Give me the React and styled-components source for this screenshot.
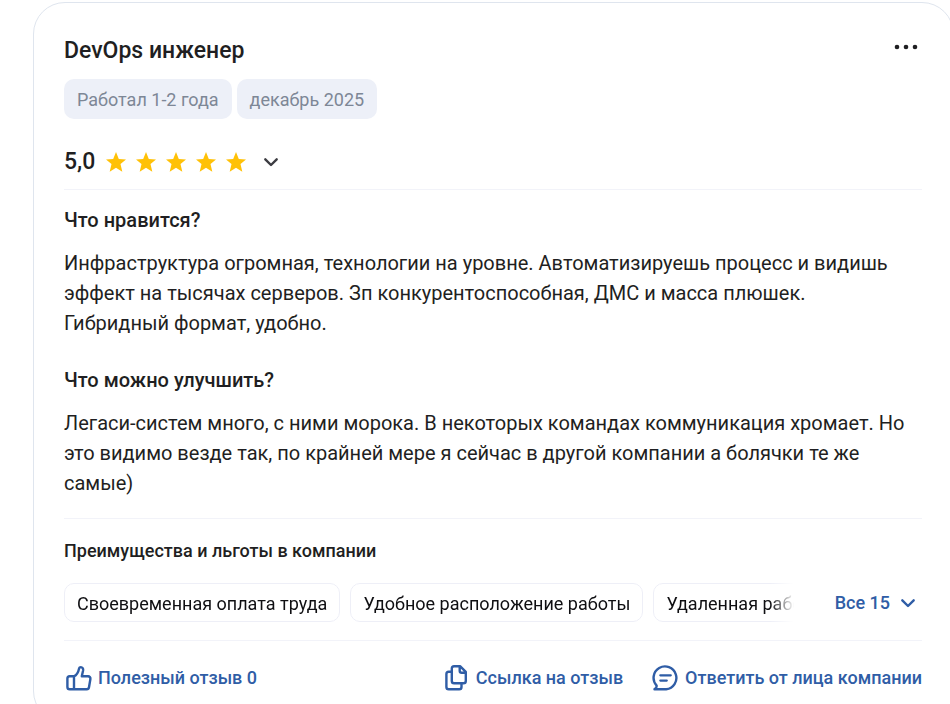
import React, { useState } from 'react';
import styled, { createGlobalStyle } from 'styled-components';

const GlobalStyle = createGlobalStyle`
    * {
        box-sizing: border-box;
    }
    body {
        margin: 0;
        background: #ffffff;
        color: #1f1f22;
        font-family: Roboto, 'Liberation Sans', sans-serif;
    }
    button {
        font-family: inherit;
        border: none;
        background: none;
        padding: 0;
        cursor: pointer;
    }
    svg {
        display: block;
        flex-shrink: 0;
    }
`;

const Page = styled.main`
    padding-top: 2px;
    padding-left: 33px;
    overflow: hidden;
`;

// The card runs slightly past the right side of the page
const Card = styled.article`
    margin-right: -4px;
    padding: 31px 31px 30px 30px;
    border: 1px solid #dfe5ee;
    border-radius: 32px;
`;

const Header = styled.header`
    display: flex;
    justify-content: space-between;
    align-items: flex-start;
`;

const Title = styled.h2`
    margin: 0;
    font-size: 23px;
    line-height: 34px;
    font-weight: 500;
`;

const MenuButton = styled.button`
    padding: 8px 4px;
    color: #1f1f22;
`;

const Tags = styled.div`
    display: flex;
    gap: 5px;
    margin-top: 11px;
`;

const Tag = styled.span`
    padding: 9px 13px 7px;
    border-radius: 10px;
    background: #edf0f8;
    color: #7d8796;
    font-size: 18px;
    line-height: 24px;
`;

const Rating = styled.div`
    display: flex;
    align-items: center;
    margin-top: 27px;
    padding-bottom: 11px;
    border-bottom: 1px solid #f2f3f9;
`;

const Score = styled.span`
    margin-right: 11px;
    font-size: 23px;
    line-height: 32px;
    font-weight: 500;
`;

const Stars = styled.div`
    display: flex;
    gap: 10px;
`;

const ExpandButton = styled.button`
    margin-left: 17px;
    color: #3c3c42;
`;

const Section = styled.section`
    margin-top: ${(props) => (props.$first ? '15px' : '27px')};
`;

const SectionTitle = styled.h3`
    margin: 0;
    font-size: 20px;
    line-height: 30px;
    font-weight: 500;
`;

const Text = styled.p`
    margin: 13px 0 0;
    padding-right: 10px;
    font-size: 20px;
    line-height: 30px;
`;

const Benefits = styled.section`
    margin-top: 20px;
    padding: 20px 0 18px;
    border: solid #f2f3f9;
    border-width: 1px 0;
`;

const BenefitsTitle = styled.h4`
    margin: 0;
    font-size: 18px;
    line-height: 24px;
    font-weight: 500;
`;

const BenefitsRow = styled.div`
    display: flex;
    align-items: center;
    margin-top: 20px;
`;

const BenefitList = styled.ul`
    display: flex;
    flex: 1;
    gap: 10px;
    min-width: 0;
    margin: 0;
    padding: 0;
    list-style: none;
    overflow: hidden;
    mask-image: linear-gradient(to right, #000 calc(100% - 24px), transparent);
`;

const Benefit = styled.li`
    flex-shrink: 0;
    padding: 8px 12px 6px;
    border: 1px solid #eeeff7;
    border-radius: 10px;
    color: #0f0f12;
    font-size: 18px;
    line-height: 23px;
`;

const AllButton = styled.button`
    display: flex;
    align-items: center;
    gap: 10px;
    margin-left: 41px;
    padding-right: 6px;
    color: #2f5da6;
    font-size: 18px;
    line-height: 24px;
    font-weight: 500;
`;

const Actions = styled.footer`
    display: flex;
    align-items: center;
    gap: 28px;
    padding-top: 23px;
`;

const Action = styled.button`
    display: flex;
    align-items: center;
    gap: 6px;
    color: #2f5da6;
    font-size: 18px;
    line-height: 28px;
    font-weight: 500;
    white-space: nowrap;

    &:first-child {
        margin-right: auto;
    }
`;

const DotsIcon = () => (
    <svg width="24" height="10" viewBox="0 0 24 10" fill="currentColor" aria-hidden="true">
        <circle cx="3" cy="5" r="2.3" />
        <circle cx="12" cy="5" r="2.3" />
        <circle cx="21" cy="5" r="2.3" />
    </svg>
);

const StarIcon = () => (
    <svg width="20" height="20" viewBox="0 0 20 20" fill="#ffc107" aria-hidden="true">
        <path d="M10 0l2.8 6.9 7.2.5-5.5 4.700 1.800 7.600L10 15.700l-6.300 4 1.800-7.600L0 7.400l7.200-.5z" />
    </svg>
);

const ChevronIcon = () => (
    <svg width="16" height="16" viewBox="0 0 16 16" fill="none" stroke="currentColor" strokeWidth="2.4" strokeLinecap="round" strokeLinejoin="round" aria-hidden="true">
        <path d="M2.300 5.300L8 11l5.700-5.700" />
    </svg>
);

const LineIcon = ({ children }) => (
    <svg width="28" height="28" viewBox="0 0 28 28" fill="none" stroke="currentColor" strokeWidth="2.4" strokeLinecap="round" strokeLinejoin="round" aria-hidden="true">
        {children}
    </svg>
);

const LikeIcon = () => (
    <LineIcon>
        <path d="M10 25.200V12.300H5.700a2.300 2.300 0 0 0-2.300 2.300v8.300a2.300 2.300 0 0 0 2.300 2.300h17a2.300 2.300 0 0 0 2.300-1.900l1.400-8.300a2.300 2.300 0 0 0-2.300-2.700h-6.300l1.300-5.700c.4-2-.7-3.500-2.300-3.500-.9 0-1.500.5-1.700 1.300-.7 3.300-2.200 6.500-5.100 7.900" />
    </LineIcon>
);

const CopyIcon = () => (
    <LineIcon>
        <path d="M18.300 2.300h-6.200A2.300 2.300 0 0 0 9.800 4.600v12.300a2.300 2.300 0 0 0 2.300 2.300h9.400a2.300 2.300 0 0 0 2.300-2.300V7.800zM17.700 2.800v3.900a2 2 0 0 0 2 2h3.600" />
        <path d="M9.500 7.800H6.700a2.300 2.300 0 0 0-2.300 2.300v12.800a2.300 2.300 0 0 0 2.300 2.300h10.500a2.300 2.300 0 0 0 2.300-2.300v-3" />
    </LineIcon>
);

const ReplyIcon = () => (
    <LineIcon>
        <path d="M3.500 25.200c1.500-.7 2.300-1.800 2.100-3.600A11.400 11.400 0 1 1 15.200 25.200z" />
        <path d="M9.300 11.300h10.500M9.300 16.600h6.500" strokeWidth="2.2" />
    </LineIcon>
);

const benefits = ['Своевременная оплата труда', 'Удобное расположение работы', 'Удаленная работа'];

const App = () => {
    const [liked, setLiked] = useState(false);

    return (
        <>
            <GlobalStyle />
            <Page>
                <Card>
                    <Header>
                        <Title>DevOps инженер</Title>
                        <MenuButton type="button" aria-label="Меню">
                            <DotsIcon />
                        </MenuButton>
                    </Header>
                    <Tags>
                        <Tag>Работал 1-2 года</Tag>
                        <Tag>декабрь 2025</Tag>
                    </Tags>
                    <Rating>
                        <Score>5,0</Score>
                        <Stars>
                            {[1, 2, 3, 4, 5].map((n) => (
                                <StarIcon key={n} />
                            ))}
                        </Stars>
                        <ExpandButton type="button" aria-label="Подробные оценки">
                            <ChevronIcon />
                        </ExpandButton>
                    </Rating>
                    <Section $first>
                        <SectionTitle>Что нравится?</SectionTitle>
                        <Text>
                            Инфраструктура огромная, технологии на уровне. Автоматизируешь процесс и видишь эффект на
                            тысячах серверов. Зп конкурентоспособная, ДМС и масса плюшек. Гибридный формат, удобно.
                        </Text>
                    </Section>
                    <Section>
                        <SectionTitle>Что можно улучшить?</SectionTitle>
                        <Text>
                            Легаси-систем много, с ними морока. В некоторых командах коммуникация хромает. Но это видимо
                            везде так, по крайней мере я сейчас в другой компании а болячки те же самые)
                        </Text>
                    </Section>
                    <Benefits>
                        <BenefitsTitle>Преимущества и льготы в компании</BenefitsTitle>
                        <BenefitsRow>
                            <BenefitList>
                                {benefits.map((benefit) => (
                                    <Benefit key={benefit}>{benefit}</Benefit>
                                ))}
                            </BenefitList>
                            <AllButton type="button">
                                Все 15
                                <ChevronIcon />
                            </AllButton>
                        </BenefitsRow>
                    </Benefits>
                    <Actions>
                        <Action type="button" onClick={() => setLiked(!liked)}>
                            <LikeIcon />
                            Полезный отзыв {liked ? 1 : 0}
                        </Action>
                        <Action type="button">
                            <CopyIcon />
                            Ссылка на отзыв
                        </Action>
                        <Action type="button">
                            <ReplyIcon />
                            Ответить от лица компании
                        </Action>
                    </Actions>
                </Card>
            </Page>
        </>
    );
};

export default App;
